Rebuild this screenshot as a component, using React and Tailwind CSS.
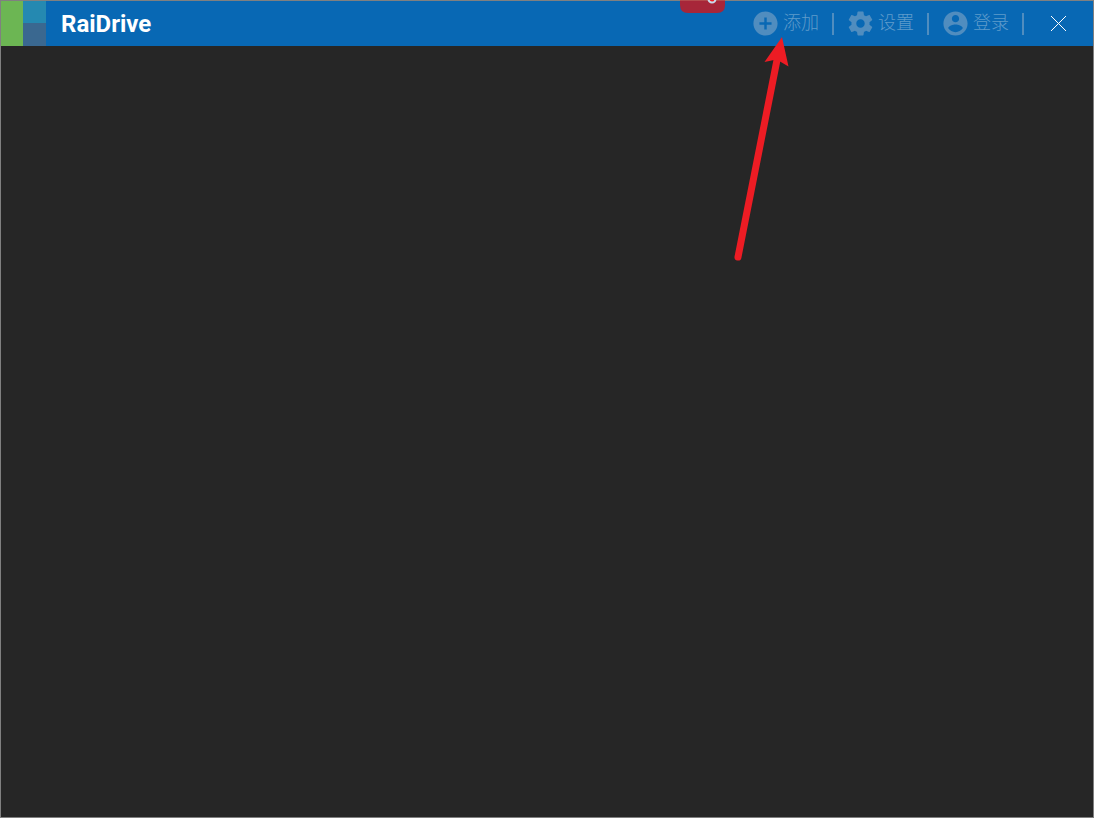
import React from "react";

const AddIcon = () => (
  <svg className="size-[29px]" viewBox="0 0 24 24" fill="currentColor">
    <path d="M12 2C6.48 2 2 6.48 2 12s4.48 10 10 10 10-4.48 10-10S17.52 2 12 2zm5 11h-4v4h-2v-4H7v-2h4V7h2v4h4v2z" />
  </svg>
);

const SettingsIcon = () => (
  <svg className="size-[29px]" viewBox="0 0 24 24" fill="currentColor">
    <path d="M19.43 12.98c.04-.32.07-.64.07-.98s-.03-.66-.07-.98l2.11-1.65c.19-.15.24-.42.12-.64l-2-3.46c-.12-.22-.39-.3-.61-.22l-2.49 1c-.52-.4-1.08-.73-1.69-.98l-.38-2.65C14.46 2.18 14.25 2 14 2h-4c-.25 0-.46.18-.49.42l-.38 2.65c-.61.25-1.17.59-1.69.98l-2.49-1c-.23-.09-.49 0-.61.22l-2 3.46c-.13.22-.07.49.12.64l2.11 1.65c-.04.32-.07.65-.07.98s.03.66.07.98l-2.11 1.65c-.19.15-.24.42-.12.64l2 3.46c.12.22.39.3.61.22l2.49-1c.52.4 1.08.73 1.69.98l.38 2.65c.03.24.24.42.49.42h4c.25 0 .46-.18.49-.42l.38-2.65c.61-.25 1.17-.59 1.69-.98l2.49 1c.23.09.49 0 .61-.22l2-3.46c.12-.22.07-.49-.12-.64l-2.11-1.65zM12 15.5c-1.93 0-3.5-1.57-3.5-3.5s1.57-3.5 3.5-3.5 3.5 1.57 3.5 3.5-1.57 3.5-3.5 3.5z" />
  </svg>
);

const AccountIcon = () => (
  <svg className="size-[29px]" viewBox="0 0 24 24" fill="currentColor">
    <path d="M12 2C6.48 2 2 6.48 2 12s4.48 10 10 10 10-4.48 10-10S17.52 2 12 2zm0 3c1.66 0 3 1.34 3 3s-1.34 3-3 3-3-1.34-3-3 1.34-3 3-3zm0 14.2c-2.5 0-4.71-1.28-6-3.22.03-1.99 4-3.08 6-3.08 1.99 0 5.97 1.09 6 3.08-1.29 1.94-3.5 3.22-6 3.22z" />
  </svg>
);

const actions = [
  { label: "添加", Icon: AddIcon },
  { label: "设置", Icon: SettingsIcon },
  { label: "登录", Icon: AccountIcon },
];

const Logo = () => (
  <svg className="size-[45px]" viewBox="0 0 45 45" shapeRendering="crispEdges">
    <rect width="22" height="45" fill="#6cb653" />
    <rect x="22" width="23" height="22" fill="#2589b1" />
    <rect x="22" y="22" width="23" height="23" fill="#3a6890" />
  </svg>
);

export default function App() {
  return (
    <div className="relative flex min-h-screen flex-col border border-[#808080] bg-[#262626] font-['Noto_Sans_CJK_SC',sans-serif]">
      <header className="flex h-[45px] items-center bg-[#0868b4]">
        <Logo />
        <h1 className="ml-[15px] flex-1 font-[Roboto,sans-serif] text-2xl leading-8 font-bold text-white">
          RaiDrive
        </h1>
        <nav className="flex items-center">
          {actions.map(({ label, Icon }) => (
            <React.Fragment key={label}>
              <button
                type="button"
                className="flex items-center gap-[3px] text-[#508dbf]"
              >
                <Icon />
                <span className="pb-1.5 text-[18px] leading-6 font-light text-[#5f9bcb]">
                  {label}
                </span>
              </button>
              <span className="mr-3 ml-[13px] h-[22px] w-[2px] bg-[#508dbf] last:mr-0" />
            </React.Fragment>
          ))}
        </nav>
        <button
          type="button"
          aria-label="关闭"
          className="flex h-full w-[69px] items-center justify-center text-white"
        >
          <svg
            className="size-[15px]"
            viewBox="0 0 15 15"
            fill="none"
            stroke="currentColor"
          >
            <path d="M0 0L15 15M15 0L0 15" />
          </svg>
        </button>
      </header>

      <main className="flex-1" />

      {/* bottom edge of the red badge hanging over the title bar */}
      <svg
        className="pointer-events-none absolute -top-px left-[679px] h-[13px] w-[45px]"
        viewBox="0 0 45 13"
      >
        <path d="M0 0H45V5Q45 13 37 13H8Q0 13 0 5Z" fill="#a72639" />
        <path d="M0 0H45V1H0Z" fill="#b34a4d" />
        <path
          d="M28.500 -1A3.500 3.500 0 0 0 35.500 -1"
          fill="#f01c24"
          stroke="#c9dcec"
          strokeWidth="2"
        />
      </svg>

      {/* pointer to the add button */}
      <svg
        className="pointer-events-none absolute top-[35px] left-[729px] h-[230px] w-[64px]"
        viewBox="730 36 64 230"
      >
        <path d="M738 257L777 60" stroke="#ed1c24" strokeWidth="7" strokeLinecap="round" />
        <path d="M782 37L788.500 66.500L780 61.500L774 60L764.500 62Z" fill="#ed1c24" />
      </svg>
    </div>
  );
}
